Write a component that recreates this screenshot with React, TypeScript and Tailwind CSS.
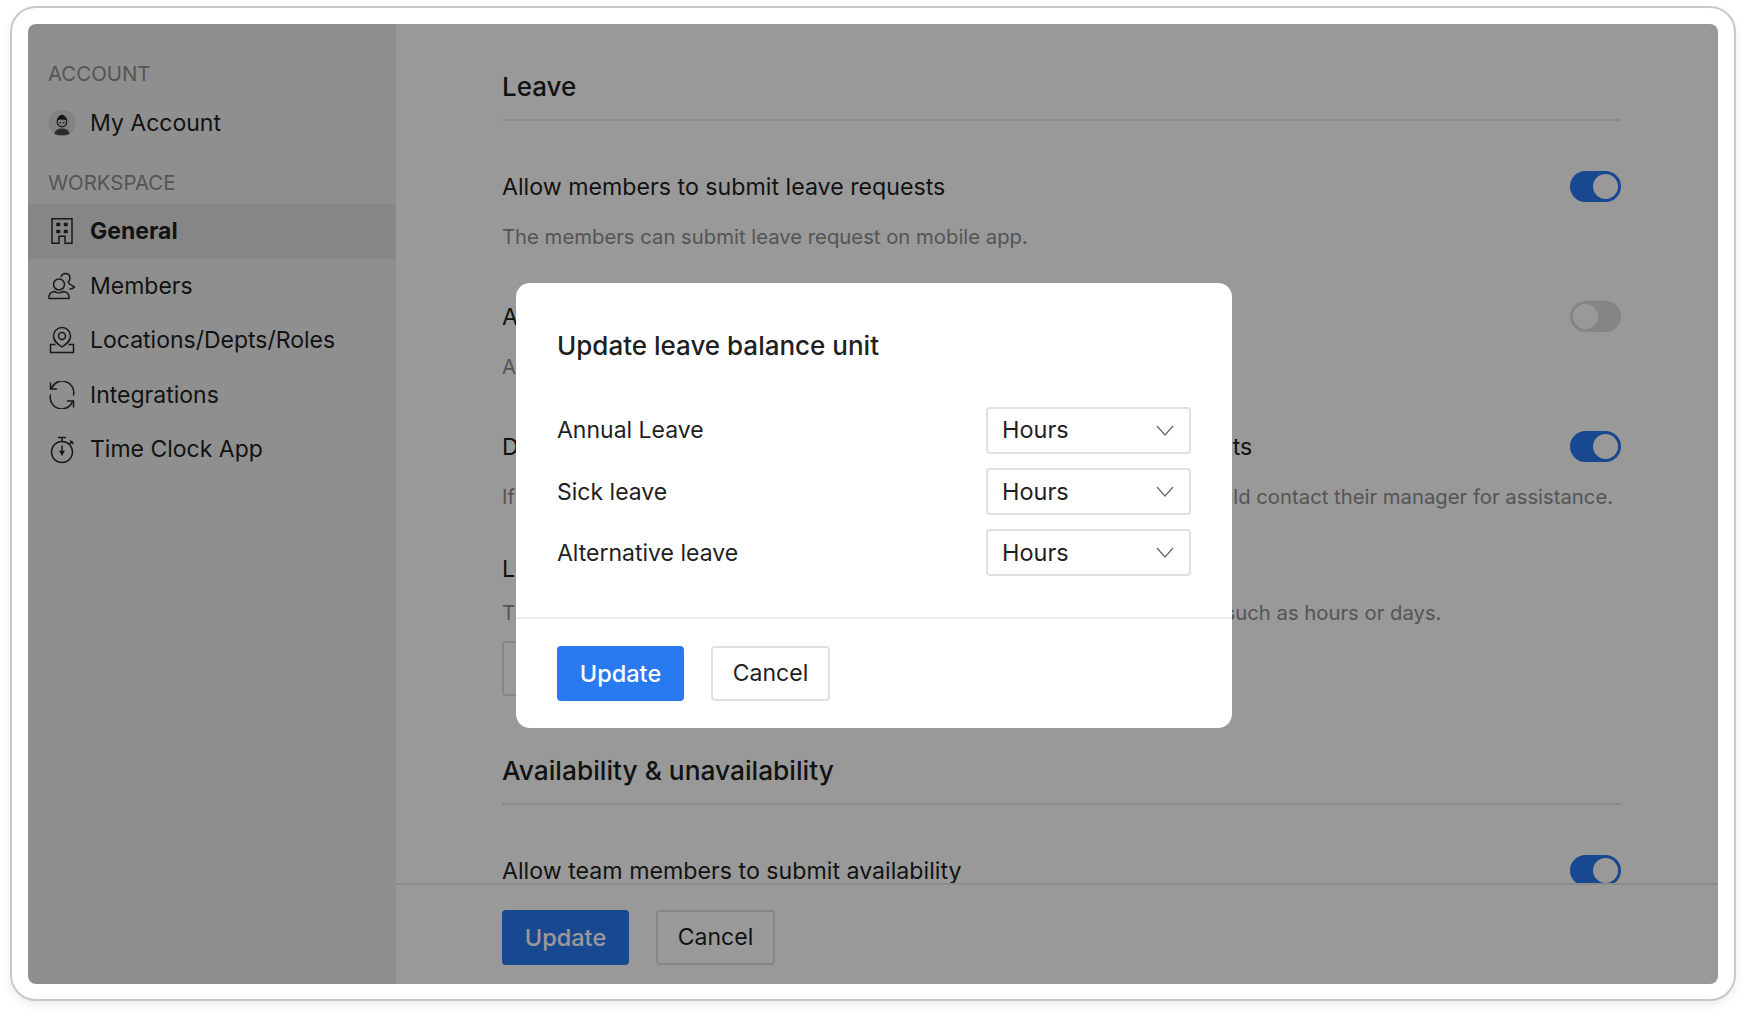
const font = { fontFamily: "Inter, 'Noto Sans', sans-serif" };

function Toggle({ on = true }: { on?: boolean }) {
    return (
        <div className={`flex h-[31px] w-[51px] shrink-0 items-center rounded-full p-[3px] ${on ? "justify-end bg-[#2979f0]" : "justify-start bg-[#dedede]"}`}>
            <div className="h-[25px] w-[25px] rounded-full bg-white" />
        </div>
    );
}

function Avatar() {
    return (
        <svg width="28" height="28" viewBox="0 0 28 28" className="shrink-0">
            <circle cx="14" cy="14" r="13.5" fill="#d9d9d9" />
            <path d="M6.500 25c.4-4 3.400-5.500 7.500-5.500s7.100 1.500 7.500 5.500c-4.200 1.800-10.800 1.800-15 0z" fill="#4a4a4a" />
            <circle cx="14" cy="13" r="4.800" fill="#cfcfcf" stroke="#2a2a2a" strokeWidth="1.200" />
            <path d="M8.800 11.500c.3-3 2.300-5 5.200-6 2.900 1 4.900 3 5.200 6-3.200-1.300-7.200-1.300-10.400 0z" fill="#222" />
            <circle cx="12.300" cy="13.800" r=".8" fill="#222" />
            <circle cx="15.700" cy="13.800" r=".8" fill="#222" />
        </svg>
    );
}

function BuildingIcon() {
    return (
        <svg width="28" height="28" viewBox="0 0 28 28" fill="none" stroke="#2a2a2a" strokeWidth="1.500" className="shrink-0">
            <path d="M4 1.800h20v24.400h-7v-7h-6v7h-7z" />
            <path d="M8.500 6h3.500v3h-3.500zM16 6h3.500v3h-3.500zM8.500 13h3.500v3h-3.500zM16 13h3.500v3h-3.500z" fill="#2a2a2a" strokeWidth="0.500" />
        </svg>
    );
}

function MembersIcon() {
    return (
        <svg width="28" height="28" viewBox="0 0 28 28" fill="none" stroke="#2a2a2a" strokeWidth="1.500" strokeLinecap="round" strokeLinejoin="round" className="shrink-0">
            <circle cx="11" cy="12.500" r="5.500" />
            <path d="M1 26.500v-1.500c0-3.500 2.500-5 5.500-5.500 2.500 1.600 6.500 1.600 9 0 3 .5 5.500 2 5.500 5.500v1.500z" />
            <path d="M13 4.500c1-2.200 3-3.300 5-3 2.500.4 4 2.400 4 4.500 0 1.600-.6 3-1.800 4 0 1.600 2.800 3 6.300 5-1.500 1.400-3 2-4.500 2" />
        </svg>
    );
}

function LocationIcon() {
    return (
        <svg width="28" height="28" viewBox="0 0 28 28" fill="none" stroke="#2a2a2a" strokeWidth="1.500" strokeLinejoin="round" className="shrink-0">
            <path d="M14 21c-4.800-3.200-8.500-6-8.500-11a8.500 8.500 0 0 1 17 0c0 5-3.700 7.800-8.500 11z" />
            <circle cx="14" cy="10" r="3.500" />
            <path d="M7.500 18.500h-5v8h23v-8h-5" />
        </svg>
    );
}

function SyncIcon() {
    return (
        <svg width="28" height="28" viewBox="0 0 28 28" fill="none" stroke="#2a2a2a" strokeWidth="1.500" strokeLinecap="round" strokeLinejoin="round" className="shrink-0">
            <path d="M3.500 7.500A11.500 11.500 0 0 1 25.500 14" />
            <path d="M2.500 2v6h6" />
            <path d="M2.500 14A11.500 11.500 0 0 0 24.500 20.500" />
            <path d="M25.500 26v-6h-6" />
        </svg>
    );
}

function StopwatchIcon() {
    return (
        <svg width="28" height="28" viewBox="0 0 28 28" fill="none" stroke="#2a2a2a" strokeWidth="1.500" strokeLinecap="round" className="shrink-0">
            <circle cx="14" cy="16" r="10.500" />
            <path d="M10.500 1.500h7M14 1.500v4M22.500 5l2.500 2.500M21.500 8l2.500-2.500" />
            <path d="M14 10v7" />
            <path d="M12.300 15.500h3.400l-1.700 3z" fill="#2a2a2a" />
        </svg>
    );
}

function Chevron() {
    return (
        <svg width="18" height="11" viewBox="0 0 18 11" fill="none" stroke="#666666" strokeWidth="1.200" className="shrink-0">
            <path d="M1 1l8 9 8-9" />
        </svg>
    );
}

function SideItem({ icon, label, active = false }: { icon: React.ReactNode; label: string; active?: boolean }) {
    return (
        <div className={`flex h-[54.6px] items-center gap-[14px] pl-[20px] text-[23px] text-[#1f1f1f] ${active ? "bg-[#dfdfdf] font-bold" : ""}`}>
            {icon}
            <span>{label}</span>
        </div>
    );
}

function SettingRow({ title, desc, on = true }: { title: string; desc: string; on?: boolean }) {
    return (
        <div className="mt-[50px]">
            <div className="flex h-[31px] items-center justify-between text-[23.2px] text-[#1f1f1f]">
                <span className="whitespace-nowrap pt-[1px]">{title}</span>
                <Toggle on={on} />
            </div>
            <p className="mt-[21px] h-[28px] whitespace-nowrap text-[20.3px] leading-[28px] text-[#8e8e8e]">{desc}</p>
        </div>
    );
}

function UnitRow({ label }: { label: string }) {
    return (
        <div className="flex h-[47px] items-center justify-between">
            <span className="pt-[1px] text-[23px] text-[#1f1f1f]">{label}</span>
            <div className="flex h-[47px] w-[205px] items-center justify-between rounded-[4px] border-2 border-[#e0e0e0] pl-[14px] pr-[15px] text-[23.5px] text-[#1f1f1f]">
                <span>Hours</span>
                <Chevron />
            </div>
        </div>
    );
}

export default function App() {
    return (
        <div className="h-[1016px] w-full bg-white pl-[10px] pt-[6px]" style={font}>
            <div className="h-[995px] w-[1726px] rounded-[26px] border-2 border-[#c9c9c9] bg-white p-[16px] shadow-[0_4px_10px_rgba(0,0,0,0.08)]">
                <div className="relative flex h-[960px] w-[1690px] overflow-hidden rounded-[8px] bg-white">
                    {/* Sidebar */}
                    <aside className="w-[368px] shrink-0 bg-[#eeeeee]">
                        <div className="pl-[20px] pt-[36px] text-[20.4px] leading-[28px] text-[#8e8e8e]">ACCOUNT</div>
                        <div className="mt-[18px] flex h-[34px] items-center gap-[14px] pl-[20px] text-[23px] text-[#1f1f1f]">
                            <Avatar />
                            <span>My Account</span>
                        </div>
                        <div className="mt-[29px] pl-[20px] text-[20.4px] leading-[28px] text-[#8e8e8e]">WORKSPACE</div>
                        <div className="mt-[7px]">
                            <SideItem icon={<BuildingIcon />} label="General" active />
                            <SideItem icon={<MembersIcon />} label="Members" />
                            <SideItem icon={<LocationIcon />} label="Locations/Depts/Roles" />
                            <SideItem icon={<SyncIcon />} label="Integrations" />
                            <SideItem icon={<StopwatchIcon />} label="Time Clock App" />
                        </div>
                    </aside>

                    {/* Main */}
                    <main className="flex min-w-0 flex-1 flex-col">
                        <div className="h-[859px] shrink-0 overflow-hidden pl-[106px] pr-[97px]">
                            <div className="mt-[47px] border-b-2 border-[#e6e6e6] pb-[16px] text-[26px] font-medium leading-[32px] text-[#1f1f1f]">Leave</div>
                            <SettingRow title="Allow members to submit leave requests" desc="The members can submit leave request on mobile app." />
                            <SettingRow title="Allow members to cancel their leave requests" desc="Approved leave requests can be cancelled from the mobile app." on={false} />
                            <SettingRow title="Disables members from requesting time off without sufficient credits" desc="If enabled, members without enough leave balance cannot submit, and should contact their manager for assistance." />
                            <div className="mt-[42px] flex h-[32px] items-center text-[23.2px] text-[#1f1f1f]">Leave balance unit</div>
                            <p className="mt-[14px] h-[28px] whitespace-nowrap text-[20.3px] leading-[28px] text-[#8e8e8e]">The leave balances for every leave type can be displayed in different units, such as hours or days.</p>
                            <button className="mt-[14px] h-[55px] w-[200px] rounded-[4px] border-2 border-[#e0e0e0] text-[23px] text-[#1f1f1f]">Edit unit</button>
                            <div className="mt-[59px] border-b-2 border-[#e6e6e6] pb-[16px] text-[26.3px] font-medium leading-[32px] text-[#1f1f1f]">Availability &amp; unavailability</div>
                            <div className="mt-[50px] flex h-[31px] items-center justify-between text-[23.2px] text-[#1f1f1f]">
                                <span className="whitespace-nowrap pt-[1px]">Allow team members to submit availability</span>
                                <Toggle />
                            </div>
                        </div>
                        <div className="flex flex-1 gap-[27px] border-t-2 border-[#e6e6e6] pl-[106px] pt-[25px]">
                            <button className="h-[55px] w-[127px] rounded-[4px] bg-[#2979f0] text-[23.5px] font-medium text-white">Update</button>
                            <button className="h-[55px] w-[119px] rounded-[4px] border-2 border-[#e0e0e0] text-[23px] text-[#1f1f1f]">Cancel</button>
                        </div>
                    </main>

                    {/* Dialog */}
                    <div className="absolute inset-0 flex items-center justify-center bg-black/40 pl-[2px] pt-[2px]">
                        <div className="flex h-[445px] w-[716px] flex-col rounded-[14px] bg-white">
                            <div className="pl-[41px] pr-[41px]">
                                <h2 className="mt-[47px] text-[26px] font-medium leading-[32px] text-[#1f1f1f]">Update leave balance unit</h2>
                                <div className="mt-[45px] flex flex-col gap-[14.3px]">
                                    <UnitRow label="Annual Leave" />
                                    <UnitRow label="Sick leave" />
                                    <UnitRow label="Alternative leave" />
                                </div>
                            </div>
                            <div className="mt-[41px] flex flex-1 gap-[27px] border-t-2 border-[#ececec] pl-[41px] pt-[27px]">
                                <button className="h-[55px] w-[127px] rounded-[4px] bg-[#2979f0] text-[23.5px] font-medium text-white">Update</button>
                                <button className="h-[55px] w-[119px] rounded-[4px] border-2 border-[#e0e0e0] text-[23px] text-[#1f1f1f]">Cancel</button>
                            </div>
                        </div>
                    </div>
                </div>
            </div>
        </div>
    );
}
